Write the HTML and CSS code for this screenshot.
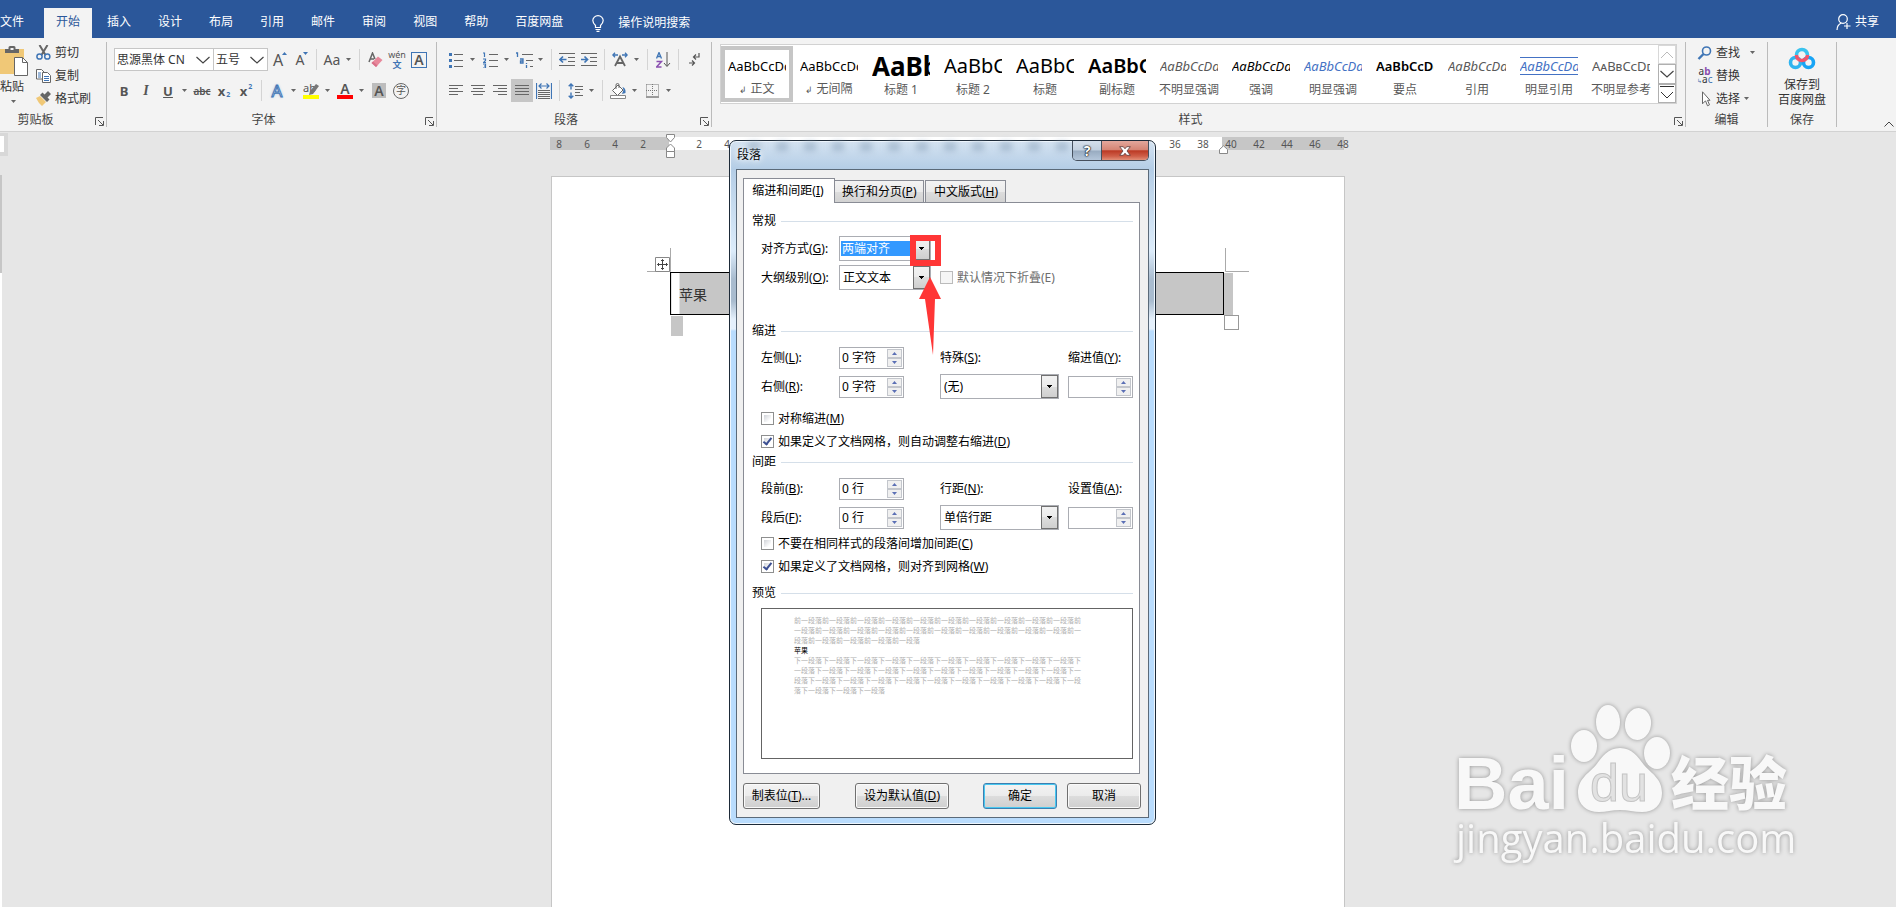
FILE: index.html
```html
<!DOCTYPE html>
<html lang="zh-CN">
<head>
<meta charset="utf-8">
<title>段落</title>
<link rel="stylesheet" href="styles.css">
</head>
<body>
<svg class="defs" aria-hidden="true">
  <symbol id="caret" viewBox="0 0 5 3"><path d="M0 0h5L2.500 3z" fill="#666"/></symbol>
  <symbol id="launch" viewBox="0 0 9 9"><path d="M.5 8V.5H8M3 3l5 5M8.500 4v4.500H4" fill="none" stroke="#555"/></symbol>
  <symbol id="up" viewBox="0 0 5 3"><path d="M2.500 0L5 3H0z" fill="#5b6fb5"/></symbol>
  <symbol id="down" viewBox="0 0 5 3"><path d="M0 0h5L2.500 3z" fill="#5b6fb5"/></symbol>
  <symbol id="chev" viewBox="0 0 14 8"><path d="M.5 1l6.500 6L13.500 1" fill="none" stroke="#444" stroke-width="1.200"/></symbol>
</svg>

<header class="tabbar">
  <nav class="tabs">
    <button class="tab file">文件</button>
    <button class="tab active">开始</button>
    <button class="tab">插入</button>
    <button class="tab">设计</button>
    <button class="tab">布局</button>
    <button class="tab">引用</button>
    <button class="tab">邮件</button>
    <button class="tab">审阅</button>
    <button class="tab">视图</button>
    <button class="tab">帮助</button>
    <button class="tab">百度网盘</button>
  </nav>
  <button class="tell">
    <svg width="12" height="17" viewBox="0 0 12 17" fill="none" stroke="#fff" stroke-width="1.200"><path d="M3.500 12.500V10.500C2 9 .8 7.800.8 5.600a5.200 5 0 0 1 10.400 0c0 2.200-1.200 3.400-2.700 4.900v2zM3.500 14.500h5M4.500 16.300h3"/></svg>
    操作说明搜索
  </button>
  <button class="share">
    <svg width="15" height="16" viewBox="0 0 15 16" fill="none" stroke="#fff" stroke-width="1.200"><circle cx="7" cy="5" r="4.300"/><path d="M1 16c0-4 2-6 4.500-7M11 9v6M8 12h6.500"/></svg>
    共享
  </button>
</header>

<div class="ribbon">
  <section class="group clip">
    <div class="body">
      <button class="paste">
        <svg width="28" height="32" viewBox="0 0 28 32"><path d="M0 4h24v25H0z" fill="#f0c877"/><path d="M5 8V4h3.500V2.500Q8.500 1 10 1h4q1.500 0 1.500 1.500V4H19v4z" fill="#666"/><path d="M10.500 3h3v2h-3z" fill="#f3f3f3"/><path d="M14.500 12.500h8l5 5v13h-13z" fill="#fff" stroke="#666"/><path d="M22.500 12.500v5h5" fill="none" stroke="#666"/></svg>
        <span>粘贴</span>
        <svg class="car" width="5" height="3"><use href="#caret"/></svg>
      </button>
      <div class="stack">
        <button class="small"><svg width="15" height="15" viewBox="0 0 15 15" fill="none" stroke-width="1.500"><path d="M3.500 0l6 10M11.500 0l-6 10" stroke="#666" stroke-width="2"/><circle cx="3.500" cy="11.500" r="2.600" stroke="#3f75b5"/><circle cx="11.300" cy="11.500" r="2.600" stroke="#3f75b5"/></svg>剪切</button>
        <button class="small"><svg width="15" height="14" viewBox="0 0 15 14"><path d="M.5.500h5l2.500 2.500v7H.5z" fill="#fff" stroke="#666"/><path d="M2 4h3M2 6h3M2 8h3" stroke="#3f75b5"/><path d="M6.500 3.500h5l3 3v7h-8z" fill="#fff" stroke="#666"/><path d="M8 7.500h5M8 9.500h5M8 11.500h5" stroke="#3f75b5"/></svg>复制</button>
        <button class="small"><svg width="15" height="15" viewBox="0 0 15 15"><path d="M0 7l4-2 6 6-4 4-3-3z" fill="#f0c877"/><path d="M4 4l2.500-2.500 2 2L12 0l3 3-3.500 3.500 2 2L11 11z" fill="#666"/></svg>格式刷</button>
      </div>
    </div>
    <footer><span>剪贴板</span><button class="launch" aria-label="剪贴板选项"><svg width="9" height="9"><use href="#launch"/></svg></button></footer>
  </section>

  <section class="group font">
    <div class="body rows">
      <div class="row">
        <span class="combo face"><input aria-label="字体" value="思源黑体 CN"><svg width="14" height="8"><use href="#chev"/></svg></span>
        <span class="combo size"><input aria-label="字号" value="五号"><svg width="14" height="8"><use href="#chev"/></svg></span>
        <button class="b glyph">A<svg class="mark" width="5" height="3" viewBox="0 0 5 3"><path d="M2.500 0L5 3H0z" fill="#3f75b5"/></svg></button>
        <button class="b glyph less">A<svg class="mark" width="5" height="3" viewBox="0 0 5 3"><path d="M0 0h5L2.500 3z" fill="#3f75b5"/></svg></button>
        <i class="sep"></i>
        <button class="b dd aa"><span>Aa</span><svg width="5" height="3"><use href="#caret"/></svg></button>
        <i class="sep"></i>
        <button class="b" aria-label="清除格式"><svg width="15" height="16" viewBox="0 0 15 16"><path d="M1 10L4.500 1 7 7M2 7h4" fill="none" stroke="#666" stroke-width="1.500"/><path d="M3.500 11L10 4.500l4.500 3.500L8 15z" fill="#e8889b"/><path d="M3.500 11l4.500 4 1.500-1.500L5 9.500z" fill="#d97088"/></svg></button>
        <button class="b wen"><span>wén</span><b>文</b></button>
        <button class="b"><span class="boxed">A</span></button>
      </div>
      <div class="row">
        <button class="b fmt"><b>B</b></button>
        <button class="b fmt it">I</button>
        <button class="b dd fmt"><span class="ul">U</span><svg width="5" height="3"><use href="#caret"/></svg></button>
        <button class="b fmt strike">abc</button>
        <button class="b fmt"><b>x</b><span class="low">2</span></button>
        <button class="b fmt"><b>x</b><span class="high">2</span></button>
        <i class="sep"></i>
        <button class="b dd"><span class="glow">A</span><svg width="5" height="3"><use href="#caret"/></svg></button>
        <button class="b dd"><span class="mk"><span class="hl">ab</span><svg class="pen" width="10" height="11" viewBox="0 0 10 11"><path d="M0 11l1-4L7 0l3 2-6 8z" fill="#777"/></svg><i class="bar yellow"></i></span><svg width="5" height="3"><use href="#caret"/></svg></button>
        <button class="b dd"><span class="mk fc">A<i class="bar red"></i></span><svg width="5" height="3"><use href="#caret"/></svg></button>
        <button class="b"><span class="shade">A</span></button>
        <button class="b"><span class="ring">字</span></button>
      </div>
    </div>
    <footer><span>字体</span><button class="launch" aria-label="字体选项"><svg width="9" height="9"><use href="#launch"/></svg></button></footer>
  </section>

  <section class="group para">
    <div class="body rows">
      <div class="row">
        <button class="b dd" aria-label="项目符号"><svg width="14" height="16" viewBox="0 0 14 16"><path d="M5 2.500h9M5 8.500h9M5 14.500h9" stroke="#666"/><path d="M0 1h3v3H0zM0 7h3v3H0zM0 13h3v3H0z" fill="#3f75b5"/></svg><svg width="5" height="3"><use href="#caret"/></svg></button>
        <button class="b dd" aria-label="编号"><svg width="15" height="16" viewBox="0 0 15 16"><path d="M6 2.500h9M6 8.500h9M6 14.500h9" stroke="#666"/><path d="M0 1h1.500v4M0 7h2.500v1.500L.5 10.500H3M0 12h2.500v4H0M1 14h1.500" fill="none" stroke="#3f75b5" stroke-width="1.200"/></svg><svg width="5" height="3"><use href="#caret"/></svg></button>
        <button class="b dd" aria-label="多级列表"><svg width="17" height="16" viewBox="0 0 17 16"><path d="M6 2.500h11M10 8.500h7M14 14.500h3" stroke="#666"/><path d="M0 1h1.500v4M4 7h3v4H4.500V9H7M10.500 11v1M10.500 13v3" fill="none" stroke="#3f75b5" stroke-width="1.300"/></svg><svg width="5" height="3"><use href="#caret"/></svg></button>
        <i class="sep"></i>
        <button class="b" aria-label="减少缩进"><svg width="16" height="14" viewBox="0 0 16 14"><path d="M0 .5h16M9 4.500h7M9 8.500h7M0 12.500h16" stroke="#666"/><path d="M7.500 6.500H1M4 3.500L1 6.500l3 3" fill="none" stroke="#3f75b5" stroke-width="1.700"/></svg></button>
        <button class="b" aria-label="增加缩进"><svg width="16" height="14" viewBox="0 0 16 14"><path d="M0 .5h16M9 4.500h7M9 8.500h7M0 12.500h16" stroke="#666"/><path d="M0 6.500h6.500M3.500 3.500l3 3-3 3" fill="none" stroke="#3f75b5" stroke-width="1.700"/></svg></button>
        <i class="sep"></i>
        <button class="b dd" aria-label="中文版式"><svg width="16" height="15" viewBox="0 0 16 15" fill="none"><path d="M3 14L8 4.500 13 14M5 11h6" stroke="#666" stroke-width="1.800"/><path d="M6 3H.8M3 .8L.8 3 3 5.200M10 3h5.200M13 .8L15.200 3 13 5.200" stroke="#3f75b5" stroke-width="1.300"/></svg><svg width="5" height="3"><use href="#caret"/></svg></button>
        <i class="sep"></i>
        <button class="b" aria-label="排序"><svg width="15" height="16" viewBox="0 0 15 16" fill="none"><path d="M.5 6.500L3 .5l2.500 6M1.500 4.500h3" stroke="#3f75b5" stroke-width="1.300"/><path d="M.5 9.500h5l-5 5.500h5" stroke="#8a4fb0" stroke-width="1.500"/><path d="M11 0v14M8 11l3 3.500 3-3.500" stroke="#555"/></svg></button>
        <i class="sep"></i>
        <button class="b" aria-label="显示编辑标记"><svg width="11" height="13" viewBox="0 0 11 13" fill="none" stroke="#555" stroke-width="1.200"><path d="M10 0v4H4.500M7 1.500L4.500 4 7 6.500M0 10h5M3 7.500L5.500 10 3 12.500"/></svg></button>
      </div>
      <div class="row">
        <button class="b" aria-label="左对齐"><svg width="14" height="12" viewBox="0 0 14 12"><path d="M0 .5h14M0 3.500h9M0 6.500h14M0 9.500h9" stroke="#666"/></svg></button>
        <button class="b" aria-label="居中"><svg width="14" height="12" viewBox="0 0 14 12"><path d="M0 .5h14M2 3.500h10M0 6.500h14M2 9.500h10" stroke="#666"/></svg></button>
        <button class="b" aria-label="右对齐"><svg width="14" height="12" viewBox="0 0 14 12"><path d="M0 .5h14M5 3.500h9M0 6.500h14M5 9.500h9" stroke="#666"/></svg></button>
        <button class="b on" aria-label="两端对齐"><svg width="14" height="12" viewBox="0 0 14 12"><path d="M0 .5h14M0 3.500h14M0 6.500h14M0 9.500h14" stroke="#666"/></svg></button>
        <button class="b" aria-label="分散对齐"><svg width="16" height="16" viewBox="0 0 16 16" fill="none"><path d="M.5 0v16M15.500 0v16M3 3h10M5.500.500L3 3l2.500 2.500M10.500.500L13 3l-2.500 2.500" stroke="#3f75b5" stroke-width="1.200"/><path d="M2 7.500h12M2 9.500h12M2 11.500h12M2 13.500h12M2 15.500h12" stroke="#666"/></svg></button>
        <i class="sep"></i>
        <button class="b dd" aria-label="行距"><svg width="15" height="16" viewBox="0 0 15 16" fill="none"><path d="M7 3.500h8M7 6.500h8M7 9.500h5M7 12.500h8" stroke="#666"/><path d="M3 1v5.500M3 9.500V15M.7 3.300L3 1l2.300 2.300M.7 12.700L3 15l2.300-2.300" stroke="#3f75b5" stroke-width="1.400"/></svg><svg width="5" height="3"><use href="#caret"/></svg></button>
        <i class="sep"></i>
        <button class="b dd" aria-label="底纹"><svg width="17" height="16" viewBox="0 0 17 16"><path d="M2.500 7.500L8 2l5 5-5.500 5.500z" fill="#fff" stroke="#666"/><path d="M6 6V2Q6 .5 7.500.500T9 2v3" fill="none" stroke="#666"/><path d="M12.500 4Q16 5 15.500 10L12 11l1.500-4z" fill="#3f75b5"/><path d="M.5 12.500h15v3H.5z" fill="#fff" stroke="#888"/></svg><svg width="5" height="3"><use href="#caret"/></svg></button>
        <button class="b dd" aria-label="边框"><svg width="13" height="14" viewBox="0 0 13 14" fill="none" stroke="#777"><path d="M.5.500h12v12M.5.500v12M6.500 0v12M0 6.500h12" stroke-dasharray="1 1"/><path d="M0 13h13" stroke="#444"/></svg><svg width="5" height="3"><use href="#caret"/></svg></button>
      </div>
    </div>
    <footer><span>段落</span><button class="launch" aria-label="段落选项"><svg width="9" height="9"><use href="#launch"/></svg></button></footer>
  </section>

  <section class="group styles">
    <div class="body">
      <div class="gallery">
        <button class="style sel"><span class="s">AaBbCcDd</span><em><i>↲</i> 正文</em></button>
        <button class="style"><span class="s">AaBbCcDd</span><em><i>↲</i> 无间隔</em></button>
        <button class="style"><span class="s h1">AaBb</span><em>标题 1</em></button>
        <button class="style"><span class="s h2">AaBbC</span><em>标题 2</em></button>
        <button class="style"><span class="s h2">AaBbC</span><em>标题</em></button>
        <button class="style"><span class="s h2 bd">AaBbC</span><em>副标题</em></button>
        <button class="style"><span class="s it gray">AaBbCcDd</span><em>不明显强调</em></button>
        <button class="style"><span class="s it">AaBbCcDd</span><em>强调</em></button>
        <button class="style"><span class="s it blue">AaBbCcDd</span><em>明显强调</em></button>
        <button class="style"><span class="s bd">AaBbCcDd</span><em>要点</em></button>
        <button class="style"><span class="s it gray">AaBbCcDd</span><em>引用</em></button>
        <button class="style"><span class="s it blue lined">AaBbCcDd</span><em>明显引用</em></button>
        <button class="style"><span class="s sc gray">AaBbCcDd</span><em>不明显参考</em></button>
        <div class="scroll">
          <button aria-label="上一行" class="off"><svg width="14" height="8" viewBox="0 0 14 8"><path d="M1 7l6-6 6 6" fill="none" stroke="#bbb"/></svg></button>
          <button aria-label="下一行"><svg width="14" height="8"><use href="#chev"/></svg></button>
          <button aria-label="其他"><svg width="14" height="14" viewBox="0 0 14 14" fill="none" stroke="#333"><path d="M0 .5h14M1 6l6 6 6-6"/></svg></button>
        </div>
      </div>
    </div>
    <footer><span>样式</span><button class="launch" aria-label="样式选项"><svg width="9" height="9"><use href="#launch"/></svg></button></footer>
  </section>

  <section class="group edit">
    <div class="body">
      <div class="stack">
        <button class="small"><svg width="15" height="14" viewBox="0 0 15 14" fill="none" stroke="#3f75b5"><circle cx="9.500" cy="5" r="4" stroke-width="1.600"/><path d="M6.500 8L1.500 13" stroke-width="2.400"/></svg>查找<svg class="far" width="5" height="3"><use href="#caret"/></svg></button>
        <button class="small"><span class="swap"><span>a<b>b</b></span><span><i>↳</i>a<u>c</u></span></span>替换</button>
        <button class="small"><svg width="15" height="16" viewBox="0 0 15 16"><path d="M5.500.800v12l3-3 2 5 2-1-2-4.500H13z" fill="#fff" stroke="#666"/></svg>选择<svg width="5" height="3"><use href="#caret"/></svg></button>
      </div>
    </div>
    <footer><span>编辑</span></footer>
  </section>

  <section class="group save">
    <div class="body">
      <button class="pan">
        <svg width="28" height="24" viewBox="0 0 28 24" fill="none" stroke-width="3.600"><circle cx="7.500" cy="15.500" r="5" stroke="#2fb4f0"/><circle cx="20.500" cy="15.500" r="5" stroke="#18a4f5"/><path d="M8.500 8a5.500 5.500 0 1 1 11 0" stroke="#3bc3ee"/><path d="M19.500 8a5.500 5.500 0 0 1-11 0" stroke="#f2556b"/></svg>
        <span>保存到<br>百度网盘</span>
      </button>
    </div>
    <footer><span>保存</span></footer>
  </section>
  <div class="tail"><button class="collapse" aria-label="折叠功能区"><svg width="10" height="6" viewBox="0 0 10 6"><path d="M.5 5.500L5 1l4.500 4.500" fill="none" stroke="#444"/></svg></button></div>
</div>

<main class="work">
  <div class="corner"></div>
  <div class="vruler"></div>
  <div class="ruler">
    <div class="nums"><span>8</span><span>6</span><span>4</span><span>2</span><span></span><span>2</span><span>4</span><span></span><span></span><span></span><span></span><span></span><span></span><span></span><span></span><span></span><span></span><span></span><span></span><span></span><span></span><span></span><span>36</span><span>38</span><span>40</span><span>42</span><span>44</span><span>46</span><span>48</span></div>
    <svg class="ind left" width="9" height="25" viewBox="0 0 9 25" fill="#fff" stroke="#888"><path d="M.5.500h8v3L4.500 8 .5 3.500zM.5 17.500v-3.500L4.500 10l4 4v3.500zM.5 17.500h8v6h-8z"/></svg>
    <svg class="ind right" width="9" height="9" viewBox="0 0 9 9" fill="#fff" stroke="#888"><path d="M.5 8.500V4.500L4.500.800l4 3.700v4z"/></svg>
  </div>
  <article class="page">
    <svg class="crop" width="24" height="24" viewBox="0 0 24 24"><path d="M23.500 0v23.500H0" fill="none" stroke="#aaa"/></svg>
    <svg class="move" width="15" height="15" viewBox="0 0 15 15" fill="none"><path d="M.5.500h14v14H.5z" fill="#fff" stroke="#888"/><path d="M7.500 2.500v10M2.500 7.500h10M6 4l1.500-1.500L9 4M6 11l1.500 1.500L9 11M4 6L2.500 7.500 4 9M11 6l1.500 1.500L11 9" stroke="#444"/></svg>
    <table class="cells"><tr><td>苹果</td></tr></table>
    <i class="below"></i>
    <i class="beside"></i>
    <i class="grip"></i>
    <svg class="crop r" width="24" height="24" viewBox="0 0 24 24"><path d="M.5 0v23.500H24" fill="none" stroke="#aaa"/></svg>
  </article>

  <svg class="wm" width="350" height="180" viewBox="0 0 350 180" role="img" aria-label="Baidu 经验" fill="#f8f8f8">
    <text x="14" y="119" class="wb">Bai</text>
    <ellipse cx="144" cy="56" rx="13" ry="16"/><ellipse cx="168" cy="32" rx="12" ry="17"/><ellipse cx="198" cy="34" rx="13" ry="16" transform="rotate(8 198 34)"/><ellipse cx="217" cy="63" rx="13" ry="16"/>
    <path d="M180 58c12 0 18 9 24 17 8 9 18 14 18 28 0 12-8 19-20 19-8 0-14-2-22-2s-14 2-21 2c-12 0-21-7-21-19 0-14 10-19 18-28 6-8 12-17 24-17z"/>
    <text x="150" y="111" class="wd">du</text>
    <text x="231" y="115" class="wc">经验</text>
    <text x="16" y="163" class="wu">jingyan.baidu.com</text>
  </svg>
</main>

<div class="dialog" role="dialog" aria-labelledby="dt">
  <header class="title">
    <div class="ghost" aria-hidden="true"><i></i><i></i><i></i><i></i><i></i><i></i><i></i><i></i><i></i><i></i><i></i><i></i></div>
    <h1 id="dt">段落</h1>
    <div class="wbtns"><button>?</button><button class="x" aria-label="关闭"><svg width="12" height="10" viewBox="0 0 12 10"><path d="M.7.700h3.600L6 2.800 7.700.700h3.600L8 5l3.300 4.300H7.700L6 7.200 4.300 9.300H.7L4 5z" fill="#fff" stroke="#5b3a3a" stroke-width=".8"/></svg></button></div>
  </header>
  <form class="client">
    <div class="dtabs">
      <button type="button" class="cur">缩进和间距(<u>I</u>)</button>
      <button type="button">换行和分页(<u>P</u>)</button>
      <button type="button">中文版式(<u>H</u>)</button>
    </div>
    <div class="panel">
      <h2>常规</h2>
      <div class="grid first">
        <label for="al">对齐方式(<u>G</u>):</label>
        <span class="drop hot"><select id="al"><option>两端对齐</option></select></span>
        <label for="ol">大纲级别(<u>O</u>):</label>
        <span class="drop"><select id="ol"><option>正文文本</option></select></span>
        <label class="check dim"><input type="checkbox" disabled>默认情况下折叠(E)</label>
      </div>
      <h2 class="sp">缩进</h2>
      <div class="grid">
        <label for="l">左侧(<u>L</u>):</label>
        <span class="spin"><input id="l" value="0 字符"><span><button type="button" aria-label="增"><svg width="5" height="3"><use href="#up"/></svg></button><button type="button" aria-label="减"><svg width="5" height="3"><use href="#down"/></svg></button></span></span>
        <label for="s">特殊(<u>S</u>):</label>
        <label for="y">缩进值(<u>Y</u>):</label>
        <label for="r">右侧(<u>R</u>):</label>
        <span class="spin"><input id="r" value="0 字符"><span><button type="button" aria-label="增"><svg width="5" height="3"><use href="#up"/></svg></button><button type="button" aria-label="减"><svg width="5" height="3"><use href="#down"/></svg></button></span></span>
        <span class="drop wide"><select id="s"><option>(无)</option></select></span>
        <span class="spin"><input id="y" value=""><span><button type="button" aria-label="增"><svg width="5" height="3"><use href="#up"/></svg></button><button type="button" aria-label="减"><svg width="5" height="3"><use href="#down"/></svg></button></span></span>
      </div>
      <div class="checks a">
        <label class="check"><input type="checkbox">对称缩进(<u>M</u>)</label>
        <label class="check"><input type="checkbox" checked>如果定义了文档网格，则自动调整右缩进(<u>D</u>)</label>
      </div>
      <h2>间距</h2>
      <div class="grid">
        <label for="bf">段前(<u>B</u>):</label>
        <span class="spin"><input id="bf" value="0 行"><span><button type="button" aria-label="增"><svg width="5" height="3"><use href="#up"/></svg></button><button type="button" aria-label="减"><svg width="5" height="3"><use href="#down"/></svg></button></span></span>
        <label for="ls">行距(<u>N</u>):</label>
        <label for="at">设置值(<u>A</u>):</label>
        <label for="af">段后(<u>F</u>):</label>
        <span class="spin"><input id="af" value="0 行"><span><button type="button" aria-label="增"><svg width="5" height="3"><use href="#up"/></svg></button><button type="button" aria-label="减"><svg width="5" height="3"><use href="#down"/></svg></button></span></span>
        <span class="drop wide"><select id="ls"><option>单倍行距</option></select></span>
        <span class="spin"><input id="at" value=""><span><button type="button" aria-label="增"><svg width="5" height="3"><use href="#up"/></svg></button><button type="button" aria-label="减"><svg width="5" height="3"><use href="#down"/></svg></button></span></span>
      </div>
      <div class="checks b2">
        <label class="check"><input type="checkbox">不要在相同样式的段落间增加间距(<u>C</u>)</label>
        <label class="check"><input type="checkbox" checked>如果定义了文档网格，则对齐到网格(<u>W</u>)</label>
      </div>
      <h2>预览</h2>
      <div class="preview">
        <p>前一段落前一段落前一段落前一段落前一段落前一段落前一段落前一段落前一段落前一段落前<br>一段落前一段落前一段落前一段落前一段落前一段落前一段落前一段落前一段落前一段落前一<br>段落前一段落前一段落前一段落前一段落</p>
        <p class="me">苹果</p>
        <p>下一段落下一段落下一段落下一段落下一段落下一段落下一段落下一段落下一段落下一段落下<br>一段落下一段落下一段落下一段落下一段落下一段落下一段落下一段落下一段落下一段落下一<br>段落下一段落下一段落下一段落下一段落下一段落下一段落下一段落下一段落下一段落下一段<br>落下一段落下一段落下一段落</p>
      </div>
    </div>
    <div class="acts">
      <button type="button" class="w77">制表位(<u>T</u>)...</button>
      <button type="button" class="w94">设为默认值(<u>D</u>)</button>
      <button type="button" class="ok">确定</button>
      <button type="button">取消</button>
    </div>
  </form>
  <svg class="point" width="31" height="121" viewBox="0 0 31 121"><path d="M3 3h25v25H3z" fill="none" stroke="#ff3636" stroke-width="6"/><path d="M20 42l11 22h-6l-2 56-8-56H9z" fill="#ff3636"/></svg>
</div>
</body>
</html>
```
FILE: styles.css
```css
*, *::after { box-sizing: border-box; }
body { margin: 0; height: 100vh; display: flex; flex-direction: column; overflow: hidden; background: #e6e6e6; font: 12px/16px "Noto Sans", "Noto Sans CJK SC", sans-serif; color: #333; position: relative; }
button, input, select { font: inherit; color: inherit; margin: 0; padding: 0; border: 0; background: none; border-radius: 0; }
svg { display: block; flex: none; }
.defs { position: absolute; width: 0; height: 0; }

.tabbar { height: 38px; background: #2b579a; color: #fff; display: flex; align-items: stretch; padding: 8px 17px 0 0; flex: none; }
.tabs { display: flex; gap: 3px; margin-left: -12px; }
.tab { padding: 0 12px 2px; white-space: nowrap; }
.tab.file { margin-right: 5px; }
.tab.active { background: #f3f3f3; color: #2b579a; }
.tell { display: flex; align-items: center; gap: 14px; margin-left: 17px; }
.share { display: flex; align-items: center; gap: 4px; margin-left: auto; padding-bottom: 2px; }

.ribbon { display: flex; height: 94px; background: #f3f3f3; border-bottom: 1px solid #d2d2d2; flex: none; padding: 4px 0; color: #333; }
.group { display: flex; flex-direction: column; border-right: 1px solid #bbb; flex: none; }
.group .body { height: 72px; display: flex; }
.group footer { display: flex; justify-content: center; align-items: center; position: relative; height: 14px; margin-top: 1px; color: #444; }
.group .launch { position: absolute; right: 2px; bottom: 1px; }
.font footer, .para footer, .styles footer { padding-right: 16px; }
.clip { width: 107px; }
.clip footer { padding-right: 35px; }
.paste { width: 28px; display: flex; flex-direction: column; align-items: flex-start; padding-top: 3px; }
.paste span { margin-top: 2px; }
.paste .car { margin: 5px 0 0 11px; }
.stack { display: flex; flex-direction: column; padding-left: 8px; }
.small { display: flex; align-items: center; gap: 4px; height: 23px; white-space: nowrap; }
.clip .stack, .edit .stack { margin-top: -1px; }
.rows { flex-direction: column; gap: 8px; padding-top: 6px; }
.row { display: flex; align-items: center; height: 23px; }
.b { width: 22px; height: 23px; display: flex; align-items: center; justify-content: center; flex: none; color: #555; position: relative; }
.b.dd { width: 34px; display: grid; grid-template-columns: 22px 12px; justify-items: center; }
.b.dd > svg:last-child { justify-self: start; margin-left: 3px; }
.b.on { background: #c6c6c6; }
.sep { width: 1px; height: 21px; margin: 0 4px; background: #d4d4d4; flex: none; }
.font { width: 330px; }
.font .row { padding-left: 6px; }
.font .row:first-child { padding-left: 7px; }
.combo { height: 23px; border: 1px solid #c6c6c6; background: #fff; display: flex; align-items: center; padding: 0 3px 0 2px; }
.combo input { flex: 1; min-width: 0; }
.face { width: 100px; }
.size { width: 55px; margin-left: -1px; }
.glyph { font-size: 16px; }
.glyph.less { font-size: 14px; }
.glyph .mark { margin: -13px -2px 0 -1px; }
.aa { font-size: 14px; }
.wen { flex-direction: column; font-size: 9px; line-height: 10px; }
.wen b { color: #3f75b5; font-weight: 700; }
.boxed { width: 16px; height: 16px; border: 1px solid #3f75b5; font-size: 14px; line-height: 14px; text-align: center; font-weight: 600; }
.fmt { font-size: 13px; }
.fmt.it { font-family: "Liberation Serif", serif; font-style: italic; font-weight: 700; font-size: 14px; }
.ul { text-decoration: underline; font-weight: 700; }
.strike { text-decoration: line-through; font-size: 10px; font-weight: 600; }
.low, .high { font-size: 7px; line-height: 8px; color: #3f75b5; font-weight: 700; margin-left: 1px; }
.low { padding-top: 8px; }
.high { padding-bottom: 8px; }
.glow { color: #f3f3f3; font-size: 17px; -webkit-text-stroke: 1px #3f75b5; text-shadow: 0 0 3px #8db6e3; }
.mk { width: 16px; height: 16px; position: relative; font-size: 11px; line-height: 10px; text-align: left; }
.mk .pen { position: absolute; right: 0; top: 1px; }
.bar { position: absolute; left: 0; bottom: 0; width: 16px; height: 4px; }
.yellow { background: #ff0; }
.red { background: #f00; }
.fc { font-size: 14px; text-align: center; font-weight: 600; line-height: 12px; }
.shade { width: 14px; height: 15px; background: #bdbdbd; line-height: 15px; font-size: 14px; text-align: center; font-weight: 600; }
.ring { width: 16px; height: 16px; border: 1px solid #666; border-radius: 8px; font-size: 10px; line-height: 13px; text-align: center; }
.para { width: 275px; }
.para .row { padding-left: 8px; }
.styles { flex: 1; min-width: 0; }
.styles .body { padding: 2px 8px 0 8px; }
.gallery { display: flex; height: 60px; border: 1px solid #d2d2d2; background: #fff; flex: 1; min-width: 0; }
.style { width: 72px; height: 56px; margin-top: 1px; display: flex; flex-direction: column; align-items: center; flex: none; color: #000; border: 4px solid transparent; }
.style.sel { border-color: #c6c6c6; }
.s { width: 58px; height: 32px; line-height: 32px; overflow: hidden; font-size: 13px; text-align: left; white-space: nowrap; }
.style em { font-style: normal; color: #595959; white-space: nowrap; }
.style em i { font-size: 9px; font-style: normal; }
.h1 { font-size: 26px; font-weight: 700; }
.h2 { font-size: 20px; }
.bd { font-weight: 600; }
.s.it { font-style: italic; }
.gray { color: #595959; }
.blue { color: #4472c4; }
.lined { border: 1px solid #4472c4; border-width: 1px 0; height: 18px; line-height: 16px; margin: 7px 0; }
.sc { font-variant: small-caps; }
.scroll { width: 18px; margin-left: auto; display: flex; flex-direction: column; }
.scroll button { flex: 1; display: flex; align-items: center; justify-content: center; border: 1px solid #b0b0b0; }
.scroll .off { border-color: #d8d8d8; }
.edit { width: 82px; }
.edit .stack { padding-left: 11px; }
.small .far { margin-left: 6px; }
.swap { width: 15px; font-size: 10px; line-height: 8px; display: flex; flex-direction: column; }
.swap b { color: #8a4fb0; }
.swap i { font-size: 6px; color: #3f75b5; font-style: normal; }
.swap u { color: #3f75b5; text-decoration: none; }
.swap span { white-space: nowrap; }
.save { width: 69px; }
.pan { flex: 1; display: flex; flex-direction: column; align-items: center; padding-top: 5px; gap: 6px; line-height: 15px; }
.tail { width: 59px; flex: none; display: flex; justify-content: flex-end; align-items: flex-end; padding-right: 2px; }

.work { flex: 1; position: relative; overflow: hidden; display: flex; flex-direction: column; align-items: center; padding-top: 5px; min-height: 0; }
.corner { position: absolute; left: 0; top: 1px; width: 8px; height: 23px; border: solid #d8d8d8; border-width: 3px 4px 4px 0; background: #fff; }
.vruler { position: absolute; left: 0; top: 43px; bottom: 0; width: 2px; background: linear-gradient(#c6c6c6 98px, #fff 98px); }
.ruler { width: 794px; height: 13px; margin-right: 2px; position: relative; flex: none; background: linear-gradient(90deg, #c6c6c6 119px, #fff 119px, #fff 672px, #c6c6c6 672px); }
.nums { display: flex; margin-left: -5px; }
.nums span { width: 28px; flex: none; text-align: center; font-size: 10px; line-height: 15px; color: #555; }
.ind { position: absolute; }
.ind.left { left: 116px; top: -3px; }
.ind.right { left: 669px; top: 8px; }
.page { width: 794px; flex: 1; margin-top: 26px; background: #fff; border: 1px solid #c6c6c6; border-bottom: 0; position: relative; padding: 95px 0 0 118px; }
.cells { border-collapse: collapse; width: 554px; height: 43px; }
.cells td { border: 1px solid #000; padding: 3px 8px 0; font-size: 14px; background: linear-gradient(90deg, #fff 8px, #c6c6c6 8px); }
.crop { position: absolute; left: 95px; top: 71px; }
.crop.r { left: 673px; }
.move { position: absolute; left: 103px; top: 80px; }
.below { position: absolute; left: 119px; top: 139px; width: 12px; height: 20px; background: #c6c6c6; }
.beside { position: absolute; left: 672px; top: 96px; width: 9px; height: 42px; background: #c6c6c6; }
.grip { position: absolute; left: 672px; top: 138px; width: 15px; height: 15px; border: 1px solid #999; background: #fff; }
.wm { position: absolute; right: 106px; bottom: 37px; filter: drop-shadow(0 0 2px rgba(0,0,0,.35)); overflow: visible; }
.wb { font: 700 74px "Liberation Sans", sans-serif; }
.wd { font: 52px "Liberation Sans", sans-serif; fill: #e2e2e2; stroke: #c4c4c4; }
.wc { font: 900 58px "Noto Sans CJK SC", sans-serif; }
.wu { font: 40px "Open Sans", sans-serif; }

.dialog { position: absolute; left: calc(50% - 219px); top: 140px; width: 427px; padding: 0 6px 6px; border: 1px solid #1d2a38; border-radius: 7px; color: #000; background: linear-gradient(#d5e3f1 0, #b4cde6 28px, #c5daee 60px, #dcecfb 110px, #a9bccf 138px, #a9bccf 160px, #e4f0fc 178px, #e4f0fc 188px, #b9dcfd 190px); box-shadow: inset 0 0 0 1px #eef6fd; }
.title { height: 28px; display: flex; align-items: flex-start; position: relative; }
.title h1 { font-size: 12px; line-height: 16px; font-weight: 400; margin: 6px 0 0 1px; text-shadow: 0 0 5px #fff, 0 0 8px #fff; }
.ghost { position: absolute; left: 12px; top: 1px; display: flex; gap: 16px; filter: blur(3px); }
.ghost i { width: 12px; height: 9px; background: #8fa6be; opacity: .6; }
.wbtns { margin-left: auto; display: flex; border: 1px solid #46505e; border-top: 0; border-radius: 0 0 5px 5px; overflow: hidden; position: relative; }
.wbtns button { width: 28px; height: 19px; display: flex; align-items: center; justify-content: center; font-weight: 700; font-size: 14px; color: #fff; text-shadow: 0 0 1px #000, 0 0 1px #000, 0 0 2px #112; background: linear-gradient(#d5dfeb, #c2d0df 48%, #98abc0 52%, #b4c6da); }
.wbtns .x { width: 47px; border-left: 1px solid #46505e; background: linear-gradient(#e3a79c, #d68575 45%, #bc3a25 52%, #cf5f49 80%, #e28f78); }
.client { border: 1px solid #5b6a79; background: #f0f0f0; padding: 8px 7px 8px 6px; }
.dtabs { display: flex; align-items: flex-end; height: 24px; }
.dtabs button { height: 22px; padding: 0 7px; border: 1px solid #898c95; border-bottom: 0; margin-right: 1px; background: linear-gradient(#f3f3f3, #ebebeb 50%, #ddd 50%, #d2d2d2); white-space: nowrap; min-width: 81px; }
.dtabs .cur { height: 25px; width: 92px; margin: 0 -1px -1px 0; padding: 0 9px 0 7px; background: #fff; position: relative; z-index: 1; }
.panel { border: 1px solid #898c95; background: #fff; padding: 9px 6px 14px 8px; width: 397px; }
.panel h2 { font-size: 12px; font-weight: 400; line-height: 18px; height: 18px; margin: 0; display: flex; align-items: center; gap: 5px; }
.panel h2::after { content: ""; flex: 1; height: 1px; background: #d5dfe9; }
.panel h2.sp { margin-top: 32px; }
.grid { display: grid; grid-template-columns: 78px 101px 128px 65px; grid-auto-rows: 25px; row-gap: 4px; align-items: center; margin: 5px 0 0 9px; white-space: nowrap; }
.grid.first { margin-top: 6px; }
.grid.first > :nth-child(3) { grid-column: 1; }
.drop { width: 92px; height: 25px; border: 1px solid #abadb3; background: #fff; position: relative; display: flex; padding: 1px; }
.drop.wide { width: 119px; }
.drop select { appearance: none; width: 100%; padding: 0 2px; outline: 0; }
.drop.hot select { background: #39f; color: #fff; margin: 3px 0; padding: 0 1px; }
.drop::after { content: ""; position: absolute; right: 0; top: 0; bottom: 0; width: 17px; border: 1px solid #707070; pointer-events: none; background: linear-gradient(#000 0 0) 5px 9px / 5px 1px no-repeat, linear-gradient(#000 0 0) 6px 10px / 3px 1px no-repeat, linear-gradient(#000 0 0) 7px 11px / 1px 1px no-repeat, linear-gradient(#f2f2f2, #ebebeb 50%, #ddd 50%, #cfcfcf); }
.check { display: flex; align-items: center; height: 23px; white-space: nowrap; }
.check input { appearance: none; width: 13px; height: 13px; margin-right: 4px; border: 1px solid #8e8f8f; background: linear-gradient(135deg, #d0d3d8, #fff 80%) content-box; padding: 2px; position: relative; flex: none; }
.check input:checked::after { content: ""; position: absolute; left: 3px; top: 0; width: 5px; height: 9px; border: solid #3b4f92; border-width: 0 2px 2px 0; transform: rotate(38deg); }
.dim { color: #6d6d6d; }
.dim input { border-color: #bbb; background: #f6f6f6; }
.spin { width: 65px; height: 22px; border: 1px solid #abadb3; background: #fff; display: flex; padding: 1px; }
.spin input { flex: 1; min-width: 0; padding-left: 1px; }
.spin > span { width: 15px; display: flex; flex-direction: column; gap: 0; }
.spin button { flex: 1; display: flex; align-items: center; justify-content: center; border: 1px solid #c3c6cc; background: #f0f0f0; }
.checks { margin: 8px 0 0 9px; }
.checks.b2 { margin: 2px 0 6px 9px; }
.preview { height: 151px; margin: 6px 0 0 9px; border: 1px solid #646464; padding: 7px 0 0 32px; font-size: 7px; line-height: 10px; color: #b0b0b0; white-space: nowrap; }
.preview p { margin: 0; }
.preview .me { color: #000; }
.acts { display: flex; padding-top: 9px; }
.acts button { width: 74px; height: 26px; border: 1px solid #707070; border-radius: 3px; background: linear-gradient(#f3f3f3, #ebebeb 50%, #ddd 50%, #cfcfcf); box-shadow: inset 0 0 0 1px #fafafa; margin-left: 10px; white-space: nowrap; }
.acts .w77 { width: 77px; margin-left: 0; }
.acts .w94 { width: 94px; margin-left: 35px; }
.acts .ok { margin-left: 34px; border-color: #3c7fb1; box-shadow: inset 0 0 0 1px #48c8f0; }
.point { position: absolute; left: 180px; top: 94px; }
```
